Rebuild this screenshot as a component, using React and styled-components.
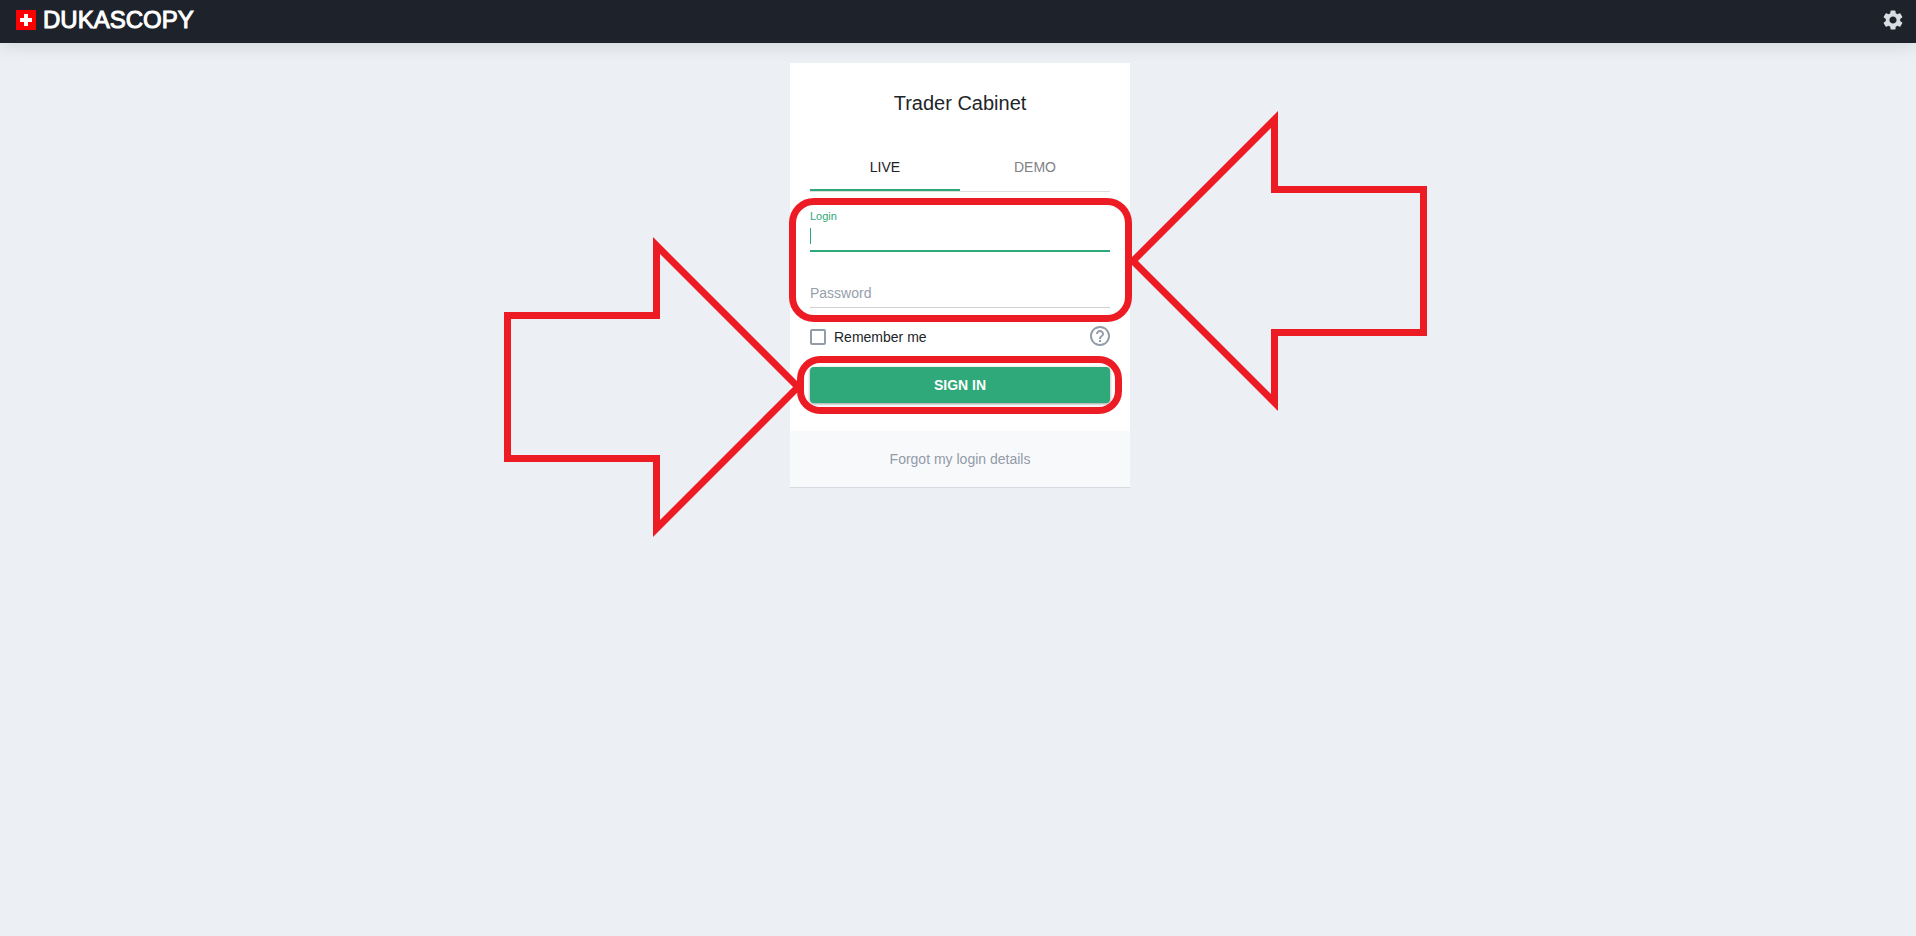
import React, { useState } from 'react';
import styled, { createGlobalStyle } from 'styled-components';
import { MdHelpOutline, MdSettings } from 'react-icons/md';

const App = () => {
  const [tab, setTab] = useState('live');
  const [remember, setRemember] = useState(false);

  return (
    <Page>
      <GlobalStyle />
      <Header>
        <Logo href="#">
          <SwissFlag />
          DUKASCOPY
        </Logo>
        <SettingsButton type="button" aria-label="Settings">
          <MdSettings />
        </SettingsButton>
      </Header>
      <Main>
        <Card onSubmit={e => e.preventDefault()}>
          <Title>Trader Cabinet</Title>
          <Body>
            <Tabs role="tablist">
              <Tab type="button" role="tab" aria-selected={tab === 'live'} $active={tab === 'live'} onClick={() => setTab('live')}>LIVE</Tab>
              <Tab type="button" role="tab" aria-selected={tab === 'demo'} $active={tab === 'demo'} onClick={() => setTab('demo')}>DEMO</Tab>
            </Tabs>
            <Fields>
              <Label htmlFor="login">Login</Label>
              <InputRow $focused>
                <Caret />
                <Input id="login" type="text" />
              </InputRow>
              <InputRow>
                <Input type="password" placeholder="Password" aria-label="Password" />
              </InputRow>
              <FieldsOutline />
              <LeftArrow>
                <Arrow points="295.5,78.5 146.5,78.5 146.5,8.5 5,150 146.5,291.5 146.5,221.5 295.5,221.5" />
              </LeftArrow>
            </Fields>
            <Options>
              <Remember>
                <Checkbox type="checkbox" checked={remember} onChange={e => setRemember(e.target.checked)} />
                Remember me
              </Remember>
              <HelpButton type="button" aria-label="Help">
                <MdHelpOutline />
              </HelpButton>
            </Options>
            <Submit>
              <SignIn type="submit">SIGN IN</SignIn>
              <SubmitOutline />
              <RightArrow>
                <Arrow points="3.5,78.5 152.5,78.5 152.5,8.5 294,150 152.5,291.5 152.5,221.5 3.5,221.5" />
              </RightArrow>
            </Submit>
          </Body>
          <Footer>
            <ForgotLink href="#">Forgot my login details</ForgotLink>
          </Footer>
        </Card>
      </Main>
    </Page>
  );
}

const SwissFlag = () => (
  <svg width="20" height="20" viewBox="0 0 20 20" aria-hidden="true">
    <rect width="20" height="20" fill="#ff0000" />
    <path d="M8 4h4v4h4v4h-4v4h-4v-4h-4v-4h4z" fill="#ffffff" />
  </svg>
)

const Arrow = ({ points }) => (
  <svg width="299" height="300" viewBox="0 0 299 300" aria-hidden="true">
    <polygon points={points} fill="none" stroke="#ed1c24" strokeWidth="7" />
  </svg>
)

const GlobalStyle = createGlobalStyle`
  * {
    box-sizing: border-box;
  }
  body {
    margin: 0;
    background: #ecf0f5;
    color: #212529;
    font-family: 'Liberation Sans', Arial, sans-serif;
    font-size: 14px;
    line-height: 20px;
  }
  button, input {
    font: inherit;
    color: inherit;
  }
  svg {
    display: block;
  }
`

const Page = styled.div`
  min-height: 100vh;
`

const Header = styled.header`
  display: flex;
  align-items: center;
  justify-content: space-between;
  height: 43px;
  padding: 0 11px 4px 16px;
  background: #1e222b;
  box-shadow: 0 0 20px rgba(0, 0, 0, 0.14);
`

const Logo = styled.a`
  display: flex;
  align-items: center;
  gap: 7px;
  color: #ffffff;
  font-size: 24px;
  -webkit-text-stroke: 1px #ffffff;
  text-decoration: none;
`

const IconButton = styled.button`
  padding: 0;
  border: 0;
  background: none;
  cursor: pointer;
  svg {
    width: 24px;
    height: 24px;
  }
`

const SettingsButton = styled(IconButton)`
  color: #d9dce2;
`

const HelpButton = styled(IconButton)`
  color: #929ba8;
`

const Main = styled.main`
  display: flex;
  justify-content: center;
  padding: 20px 16px 20px 20px;
`

const Card = styled.form`
  width: 100%;
  max-width: 340px;
  background: #ffffff;
  border-bottom: 1px solid #d5dbe1;
`

const Title = styled.h1`
  margin: 0;
  padding: 28px 20px;
  font-size: 20px;
  font-weight: 400;
  line-height: 24px;
  text-align: center;
`

const Body = styled.div`
  padding: 0 20px 28px;
`

const Tabs = styled.div`
  display: flex;
  border-bottom: 1px solid #dcdddf;
`

const Tab = styled.button`
  flex: 1;
  height: 48px;
  padding: 2px 0 0;
  border: 0;
  border-bottom: 2px solid ${props => (props.$active ? '#2fa97a' : 'transparent')};
  background: none;
  color: ${props => (props.$active ? '#212121' : '#808285')};
  cursor: pointer;
`

const Fields = styled.div`
  position: relative;
  padding: 18px 0 16px;
`

const Label = styled.label`
  display: block;
  color: #2fa97a;
  font-size: 11px;
  line-height: 12px;
`

const InputRow = styled.div`
  display: flex;
  align-items: center;
  height: ${props => (props.$focused ? '30px' : '29px')};
  border-bottom: ${props => (props.$focused ? '2px solid #2fa97a' : '1px solid #cfd1d4')};
  & + & {
    margin-top: 27px;
  }
`

const Caret = styled.span`
  width: 1px;
  height: 16px;
  background: #2fa97a;
`

const Input = styled.input`
  flex: 1;
  min-width: 0;
  padding: 0;
  border: 0;
  outline: 0;
  background: none;
  caret-color: #2fa97a;
  &::placeholder {
    color: #969fab;
    opacity: 1;
  }
`

const Options = styled.div`
  display: flex;
  align-items: center;
  justify-content: space-between;
  height: 24px;
  margin: 0 -2px 19px 0;
`

const Remember = styled.label`
  display: flex;
  align-items: center;
  gap: 8px;
  padding-top: 2px;
  cursor: pointer;
`

const Checkbox = styled.input`
  appearance: none;
  width: 16px;
  height: 16px;
  margin: 0;
  border: 2px solid #929ba8;
  border-radius: 2px;
  background: ${props => (props.checked ? '#2fa97a' : '#ffffff')};
`

const Submit = styled.div`
  position: relative;
`

const SignIn = styled.button`
  display: block;
  width: 100%;
  height: 36px;
  padding: 0;
  border: 0;
  border-radius: 4px;
  background: #2fa97a;
  box-shadow: 0 1px 3px rgba(0, 0, 0, 0.4);
  color: #ffffff;
  font-weight: 600;
  cursor: pointer;
`

const Footer = styled.footer`
  display: flex;
  align-items: center;
  justify-content: center;
  height: 56px;
  background: #f8f9fb;
`

const ForgotLink = styled.a`
  color: #929ba8;
  text-decoration: none;
`

// callouts lying over the form
const Outline = styled.div`
  position: absolute;
  border: 7px solid #ed1c24;
  pointer-events: none;
`

const FieldsOutline = styled(Outline)`
  top: 6px;
  right: -22px;
  bottom: 2px;
  left: -21px;
  border-radius: 25px;
`

const SubmitOutline = styled(Outline)`
  top: -11px;
  right: -12px;
  bottom: -11px;
  left: -13px;
  border-radius: 23px;
`

const LeftArrow = styled.div`
  position: absolute;
  top: -81px;
  left: calc(100% + 18px);
  pointer-events: none;
`

const RightArrow = styled.div`
  position: absolute;
  top: -130px;
  right: calc(100% + 7px);
  pointer-events: none;
`

export default App;
